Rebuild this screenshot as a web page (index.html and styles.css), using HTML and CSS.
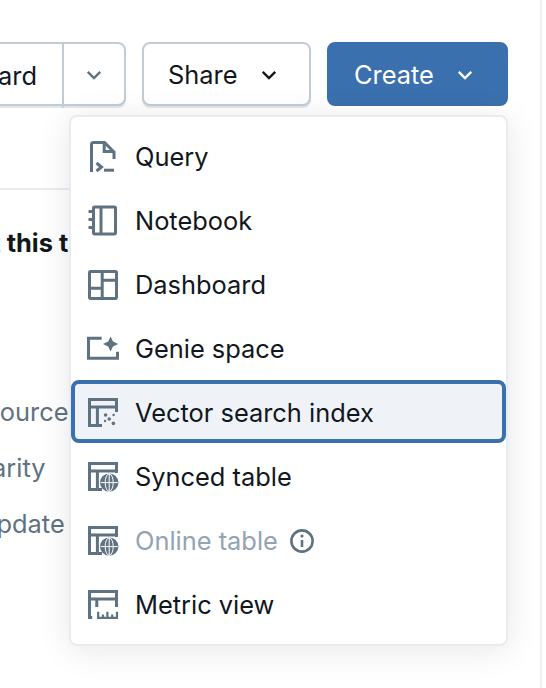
FILE: index.html
```html
<!DOCTYPE html>
<html lang="en">
<head>
  <meta charset="UTF-8">
  <title>Create menu</title>
  <link rel="stylesheet" href="styles.css">
</head>
<body>
  <div class="main">
    <div class="toolbar">
      <div class="split">
        <button class="btn split-main">Open in a dashboard</button>
        <button class="btn split-arrow">
          <svg class="chev" viewBox="0 0 16 16"><path d="M3 5.5l5 5 5-5"/></svg>
        </button>
      </div>
      <button class="btn share">Share
        <svg class="chev" viewBox="0 0 16 16"><path d="M3 5.5l5 5 5-5"/></svg>
      </button>
      <button class="btn create">Create
        <svg class="chev" viewBox="0 0 16 16"><path d="M3 5.5l5 5 5-5"/></svg>
      </button>
    </div>

    <div class="content">
      <h3 class="about">About this table</h3>
      <div class="owner">Owner</div>
      <div class="label first">Data source</div>
      <div class="label">Popularity</div>
      <div class="label">Last update</div>
    </div>

    <div class="menu">
      <div class="item">
        <svg class="icon" viewBox="0 0 16 16"><path d="M2.25 15.5V1.75a1 1 0 0 1 1-1h5.5l4.75 4.75V9"/><path d="M8.6 1v4.3h4.6"/><path d="M4.75 11l2.5 2-2.5 2"/><path d="M8.5 14.6h5"/></svg>
        <span>Query</span>
      </div>
      <div class="item">
        <svg class="icon" viewBox="0 0 16 16"><rect x="3.25" y="1" width="11" height="13.5" rx=".6"/><path d="M7 1v13.5"/><path d="M.75 3.2h2.5M.75 7.2h2.5M.75 11.2h2.5"/></svg>
        <span>Notebook</span>
      </div>
      <div class="item">
        <svg class="icon" viewBox="0 0 16 16"><rect x="1.25" y="1.25" width="13.5" height="13.5" rx=".6"/><path d="M7.6 1.25v13.5"/><path d="M1.25 9.6h6.35M7.6 5.6h7.15"/></svg>
        <span>Dashboard</span>
      </div>
      <div class="item">
        <svg class="icon" viewBox="0 0 16 16"><path d="M7.3 2.6H.75v10h14.5V9.4"/><path class="solid" d="M11.8 1.7l1.2 2.6 2.6 1.2-2.6 1.2-1.2 2.6-1.2-2.6L8 5.5l2.6-1.2z"/></svg>
        <span>Genie space</span>
      </div>
      <div class="item active">
        <svg class="icon" viewBox="0 0 16 16"><path d="M7.5 14.25H1.25V1.25h13.5V7.5"/><path d="M1.25 5h13.5M5.2 5v9.25"/><g class="dots"><circle cx="9.3" cy="9" r=".9"/><circle cx="13.3" cy="9" r=".6"/><circle cx="11.1" cy="11" r=".9"/><circle cx="9" cy="12" r=".6"/><circle cx="13.2" cy="13.2" r=".9"/></g></svg>
        <span>Vector search index</span>
      </div>
      <div class="item">
        <svg class="icon" viewBox="0 0 16 16"><path d="M7.5 14.25H1.25V1.25h13.5V6"/><path d="M1.25 5h13.5M5.2 5v9.25"/><circle class="solid" cx="11.1" cy="10.8" r="4.6"/><path class="globe" d="M6.8 10.8h8.6M11.1 6.4v8.8"/><ellipse class="globe" cx="11.1" cy="10.8" rx="2" ry="4.4"/></svg>
        <span>Synced table</span>
      </div>
      <div class="item disabled">
        <svg class="icon" viewBox="0 0 16 16"><path d="M7.5 14.25H1.25V1.25h13.5V6"/><path d="M1.25 5h13.5M5.2 5v9.25"/><circle class="solid" cx="11.1" cy="10.8" r="4.6"/><path class="globe" d="M6.8 10.8h8.6M11.1 6.4v8.8"/><ellipse class="globe" cx="11.1" cy="10.8" rx="2" ry="4.4"/></svg>
        <span>Online table</span>
        <svg class="info" viewBox="0 0 24 24"><circle cx="12" cy="12" r="10.6"/><path d="M12 11v7"/><circle class="solid" cx="12" cy="7" r="1.6"/></svg>
      </div>
      <div class="item">
        <svg class="icon" viewBox="0 0 16 16"><path d="M2.6 14.25H1.25V1.25h13.5V9"/><path d="M1.25 5h13.5M4.9 5v4"/><path class="thin" d="M5 14.4h10.4M5.6 15v-3.6M8 15v-2.2M10.2 15v-3.6M12.6 15v-2.2M15 15v-3.6"/></svg>
        <span>Metric view</span>
      </div>
    </div>
  </div>
</body>
</html>
```

FILE: styles.css
```css
* { box-sizing: border-box; }
html, body { margin: 0; height: 100%; overflow: hidden; background: #fff; }
body { font-family: Inter, "Noto Sans", sans-serif; font-size: 25.4px; color: #11171c; }

.main { position: relative; width: 542px; height: 688px; border-right: 2px solid #eef0f3; overflow: hidden; }

/* top buttons */
.toolbar { display: flex; justify-content: flex-end; gap: 16px; padding: 42px 32px 0 0; height: 106px; }
.btn { display: flex; align-items: center; height: 64px; padding-top: 2px; font: inherit; color: inherit; background: #fff; border: 2px solid #c0cdd8; border-radius: 8px; box-shadow: 0 2px 1px rgba(95,114,129,.18); white-space: nowrap; flex: none; }
.split { display: flex; flex: none; }
.split-main { border-radius: 8px 0 0 8px; padding: 2px 25px 0; }
.split-arrow { width: 64px; margin-left: -2px; justify-content: center; border-radius: 0 8px 8px 0; padding: 2px 0 0; }
.split-arrow .chev { stroke: #5f7281; margin: 0; }
.share { width: 169px; padding-left: 24px; padding-right: 0; }
.create { width: 181px; padding-left: 25px; padding-right: 0; background: #3b70ae; border-color: #3b70ae; color: #fff; box-shadow: none; }
.chev { width: 20px; height: 20px; margin-left: 21px; fill: none; stroke: currentColor; stroke-width: 1.9; }

/* page behind the menu */
.content { margin: 82px 34px 0 0; border-top: 2px solid #e8ecf0; }
.about { margin: 35px 0 0 -75px; font-size: inherit; line-height: 36px; font-weight: 700; white-space: nowrap; }
.owner { margin: 20px 0 0 -83px; line-height: 32px; color: #5f7281; }
.label { margin: 24px 0 0 -76px; line-height: 32px; color: #5f7281; white-space: nowrap; }
.label.first { margin-top: 83px; }

/* dropdown */
.menu { position: absolute; left: 69px; top: 115px; width: 439px; height: 531px; padding: 8px 0; background: #fff; border: 2px solid #e8ecf0; border-radius: 8px; box-shadow: 0 4px 32px rgba(17,23,28,.1); }
.item { display: flex; align-items: center; height: 64px; padding-left: 16px; white-space: nowrap; }
.item span { margin-left: 16px; padding-bottom: 2px; }
.item.active { height: 63px; margin: -1px 0 2px; padding-top: 2px; background: #eff3f8; border-radius: 8px; outline: 4px solid #3b70ae; outline-offset: -4px; }
.item.active span { padding-bottom: 0; }
.item.disabled { color: #92a4b3; }

.icon { width: 32px; height: 32px; flex: none; fill: none; stroke: #5f7281; stroke-width: 1.5; }
.icon .solid { fill: #5f7281; stroke: none; }
.icon .dots { fill: #5f7281; stroke: none; }
.icon .globe { stroke: #fff; stroke-width: .5; fill: none; }
.icon .thin { stroke-width: 1.1; }
.info { width: 24px; height: 24px; margin-left: 12px; fill: none; stroke: #5f7281; stroke-width: 2.6; }
.info .solid { fill: #5f7281; stroke: none; }
```
